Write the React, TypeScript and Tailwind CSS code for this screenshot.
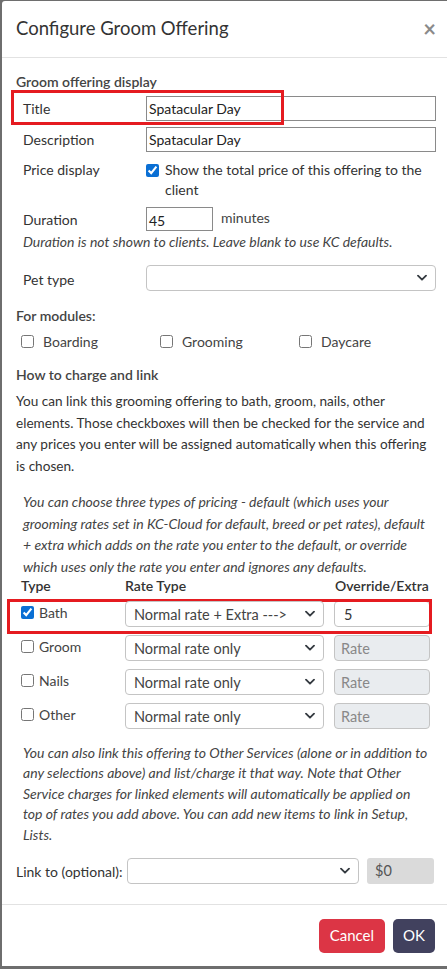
import React from "react";

const FONT = { fontFamily: "Lato, 'Noto Sans', sans-serif" };

function Chevron() {
  return (
    <svg width="10" height="7" viewBox="0 0 10 7" className="pointer-events-none absolute right-[9px] top-1/2 -translate-y-1/2">
      <path d="M1 1.2l4 4 4-4" fill="none" stroke="#343a40" strokeWidth="1.8" strokeLinecap="round" strokeLinejoin="round" />
    </svg>
  );
}

function Select({ value, className }: { value: string; className: string }) {
  return (
    <div className={`relative ${className}`}>
      <div className="flex h-full items-center rounded-[4px] border border-[#c4c4c4] bg-white pl-[8px] pt-[2px] text-[14.5px] text-[#444]">
        {value}
      </div>
      <Chevron />
    </div>
  );
}

function Lines({ lines, className }: { lines: string[]; className: string }) {
  return (
    <p className={className}>
      {lines.map((l) => (
        <span key={l} className="block whitespace-nowrap">{l}</span>
      ))}
    </p>
  );
}

const RATES = [
  { name: "Bath", checked: true, rate: "Normal rate + Extra --->", val: "5" },
  { name: "Groom", checked: false, rate: "Normal rate only", val: "" },
  { name: "Nails", checked: false, rate: "Normal rate only", val: "" },
  { name: "Other", checked: false, rate: "Normal rate only", val: "" },
];

export default function App() {
  return (
    <div className="min-h-screen bg-[#6e6e6e] pl-[2px] pt-[1px] pb-[3px]" style={FONT}>
      <div className="relative w-[446px] rounded-tl-[3px] bg-white text-[#333]">
        {/* header */}
        <div className="flex h-[57px] items-center justify-between border-b border-[#e2e2e2] pl-[14px] pr-[12px]">
          <h5 className="text-[18.5px] text-[#333]">Configure Groom Offering</h5>
          <span className="text-[22px] font-bold leading-none text-[#8a8a8a]">×</span>
        </div>

        {/* body */}
        <div className="pl-[14px] pr-[12px] pt-[13px] text-[14px]">
          <div className="font-semibold text-[#444]">Groom offering display</div>

          <div className="relative mt-[4px]">
            <div className="pointer-events-none absolute left-[-5px] top-[-6px] h-[35px] w-[273px] border-[3px] border-[#e51b20]" />
            <div className="flex h-[25px] items-center">
              <span className="w-[130px] pl-[7px]">Title</span>
              <div className="flex h-[25px] flex-1 items-center border border-[#8a8a8a] pl-[2px] text-[14px] text-[#222]">Spatacular Day</div>
            </div>
            <div className="mt-[6px] flex h-[25px] items-center">
              <span className="w-[130px] pl-[7px]">Description</span>
              <div className="flex h-[25px] flex-1 items-center border border-[#8a8a8a] pl-[2px] text-[14px] text-[#222]">Spatacular Day</div>
            </div>
            <div className="mt-[8px] flex">
              <span className="w-[130px] pl-[7px] leading-[20px]">Price display</span>
              <label className="flex flex-1 gap-[6px] leading-[20px]">
                <input type="checkbox" defaultChecked className="mt-[4px] h-[13px] w-[13px] accent-[#0a6fd4]" />
                <span>Show the total price of this offering to the client</span>
              </label>
            </div>
            <div className="mt-[7px] flex h-[24px] items-center">
              <span className="w-[130px] pl-[7px]">Duration</span>
              <div className="flex h-[24px] w-[67px] items-center border border-[#8a8a8a] pl-[2px] pt-[2px] text-[#222]">45</div>
              <span className="ml-[8px] self-start text-[#444]">minutes</span>
            </div>
            <div className="mt-[1px] pl-[7px] italic leading-[20px] text-[#444]">
              Duration is not shown to clients. Leave blank to use KC defaults.
            </div>
            <div className="mt-[13px] flex h-[26px] items-center">
              <span className="w-[130px] pl-[7px] pt-[3px]">Pet type</span>
              <Select value="" className="h-[26px] flex-1" />
            </div>
          </div>

          <div className="mt-[14px] font-semibold text-[#444]">For modules:</div>
          <div className="mt-[5px] flex h-[20px] items-center">
            {["Boarding", "Grooming", "Daycare"].map((m) => (
              <label key={m} className="flex w-[139px] items-center gap-[9px] pl-[5px]">
                <input type="checkbox" className="h-[13px] w-[13px] accent-[#0a6fd4]" />
                <span className="text-[#444]">{m}</span>
              </label>
            ))}
          </div>

          <div className="mt-[13px] font-semibold text-[#444]">How to charge and link</div>
          <Lines
            className="mt-[6px] text-[13.6px] leading-[21.7px] text-[#333]"
            lines={[
              "You can link this grooming offering to bath, groom, nails, other",
              "elements. Those checkboxes will then be checked for the service and",
              "any prices you enter will be assigned automatically when this offering",
              "is chosen.",
            ]}
          />
          <Lines
            className="mt-[13px] pl-[7px] italic leading-[21.7px] text-[#444]"
            lines={[
              "You can choose three types of pricing - default (which uses your",
              "grooming rates set in KC-Cloud for default, breed or pet rates), default",
              "+ extra which adds on the rate you enter to the default, or override",
              "which uses only the rate you enter and ignores any defaults.",
            ]}
          />

          {/* rate table */}
          <div className="mt-[-3px] flex h-[22px] items-center font-semibold text-[#333]">
            <span className="w-[109px] pl-[5px]">Type</span>
            <span className="w-[210px]">Rate Type</span>
            <span>Override/Extra</span>
          </div>
          <div className="relative">
            <div className="pointer-events-none absolute left-[-9px] top-[-2px] h-[35px] w-[425px] border-[3px] border-[#e51b20]" />
            {RATES.map((r, i) => (
              <div key={r.name} className={`flex h-[26px] items-start ${i === 0 ? "mt-[4px]" : "mt-[8px]"}`}>
                <label className="flex w-[109px] items-center gap-[5px] pl-[5px] pt-[1px]">
                  <input type="checkbox" defaultChecked={r.checked} className="h-[13px] w-[13px] accent-[#0a6fd4]" />
                  <span className="text-[#444]">{r.name}</span>
                </label>
                <Select value={r.rate} className="h-[26px] w-[199px]" />
                {r.val ? (
                  <div className="ml-[10px] flex h-[26px] w-[96px] items-center rounded-[4px] border border-[#c4c4c4] bg-white pl-[9px] pt-[2px] text-[14.5px] text-[#333]">{r.val}</div>
                ) : (
                  <div className="ml-[10px] flex h-[26px] w-[96px] items-center rounded-[4px] border border-[#c4c4c4] bg-[#e9ecef] pl-[6px] pt-[2px] text-[14.5px] text-[#888]">Rate</div>
                )}
              </div>
            ))}
          </div>

          <Lines
            className="mt-[14px] pl-[7px] italic leading-[20.5px] text-[#444]"
            lines={[
              "You can also link this offering to Other Services (alone or in addition to",
              "any selections above) and list/charge it that way. Note that Other",
              "Service charges for linked elements will automatically be applied on",
              "top of rates you add above. You can add new items to link in Setup,",
              "Lists.",
            ]}
          />

          <div className="mt-[13px] flex h-[26px] items-center">
            <span className="w-[111px] text-[#333]">Link to (optional):</span>
            <Select value="" className="h-[26px] w-[232px]" />
            <div className="ml-[8px] flex h-[26px] w-[67px] items-center rounded-[3px] bg-[#dadada] pl-[8px] text-[14.5px] text-[#555]">$0</div>
          </div>
        </div>

        {/* footer */}
        <div className="mt-[20px] flex h-[62px] items-center justify-end gap-[8px] border-t border-[#e2e2e2] pr-[13px]">
          <button className="h-[34px] rounded-[5px] bg-[#dc3545] px-[11px] text-[15px] text-white">Cancel</button>
          <button className="h-[34px] rounded-[5px] bg-[#41415e] px-[10px] text-[15px] text-white">OK</button>
        </div>
      </div>
    </div>
  );
}
